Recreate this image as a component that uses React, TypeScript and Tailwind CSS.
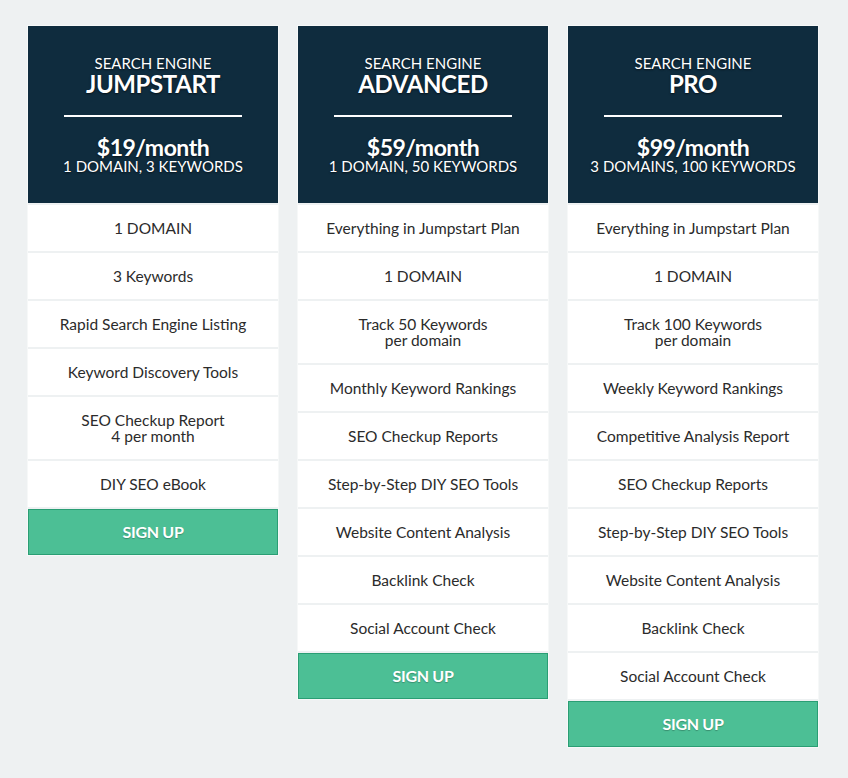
const plans = [
  {
    name: 'JUMPSTART',
    price: '$19/month',
    sub: '1 DOMAIN, 3 KEYWORDS',
    features: [
      ['1 DOMAIN'],
      ['3 Keywords'],
      ['Rapid Search Engine Listing'],
      ['Keyword Discovery Tools'],
      ['SEO Checkup Report', '4 per month'],
      ['DIY SEO eBook'],
    ],
  },
  {
    name: 'ADVANCED',
    price: '$59/month',
    sub: '1 DOMAIN, 50 KEYWORDS',
    features: [
      ['Everything in Jumpstart Plan'],
      ['1 DOMAIN'],
      ['Track 50 Keywords', 'per domain'],
      ['Monthly Keyword Rankings'],
      ['SEO Checkup Reports'],
      ['Step-by-Step DIY SEO Tools'],
      ['Website Content Analysis'],
      ['Backlink Check'],
      ['Social Account Check'],
    ],
  },
  {
    name: 'PRO',
    price: '$99/month',
    sub: '3 DOMAINS, 100 KEYWORDS',
    features: [
      ['Everything in Jumpstart Plan'],
      ['1 DOMAIN'],
      ['Track 100 Keywords', 'per domain'],
      ['Weekly Keyword Rankings'],
      ['Competitive Analysis Report'],
      ['SEO Checkup Reports'],
      ['Step-by-Step DIY SEO Tools'],
      ['Website Content Analysis'],
      ['Backlink Check'],
      ['Social Account Check'],
    ],
  },
];

function PlanCard({ plan }: { plan: (typeof plans)[number] }) {
  return (
    <div className="w-[250px] flex flex-col gap-[2px] outline outline-1 outline-[#f6f8f8]">
      {/* Header */}
      <div className="bg-[#0f2c3e] h-[177px] flex flex-col items-center text-white [text-shadow:0_1px_2px_rgba(0,0,0,0.6)]">
        <div className="mt-[28px] text-[15px] leading-[18px]">SEARCH ENGINE</div>
        <div className="text-[24px] font-bold leading-[24px] tracking-[-0.4px]">{plan.name}</div>
        <div className="mt-[19px] w-[178px] h-[2px] bg-white"></div>
        <div className="mt-[17px] text-[23px] font-bold leading-[26px] tracking-[-0.5px]">{plan.price}</div>
        <div className="text-[15px] leading-[16px] mt-[-2px]">{plan.sub}</div>
      </div>

      {/* Features */}
      {plan.features.map((f, i) => (
        <div
          key={i}
          className={`bg-white flex flex-col items-center justify-center text-[15.5px] leading-[16px] text-[#2b2b2b] ${f.length > 1 ? 'h-[62px]' : 'h-[46px]'}`}
        >
          {f.map((line, j) => (
            <div key={j}>{line}</div>
          ))}
        </div>
      ))}

      {/* Sign up */}
      <button className="h-[46px] bg-[#4cbf95] border border-[#2a9e74] text-white font-bold text-[16px] tracking-[-0.3px] [text-shadow:0_1px_1px_rgba(0,0,0,0.25)]">
        SIGN UP
      </button>
    </div>
  );
}

export default function App() {
  return (
    <div className="min-h-[778px] w-[848px] bg-[#eef1f2] pt-[26px] pl-[28px] font-['Lato','Open_Sans',sans-serif]">
      <div className="flex items-start gap-[20px]">
        {plans.map((p) => (
          <PlanCard key={p.name} plan={p} />
        ))}
      </div>
    </div>
  );
}
